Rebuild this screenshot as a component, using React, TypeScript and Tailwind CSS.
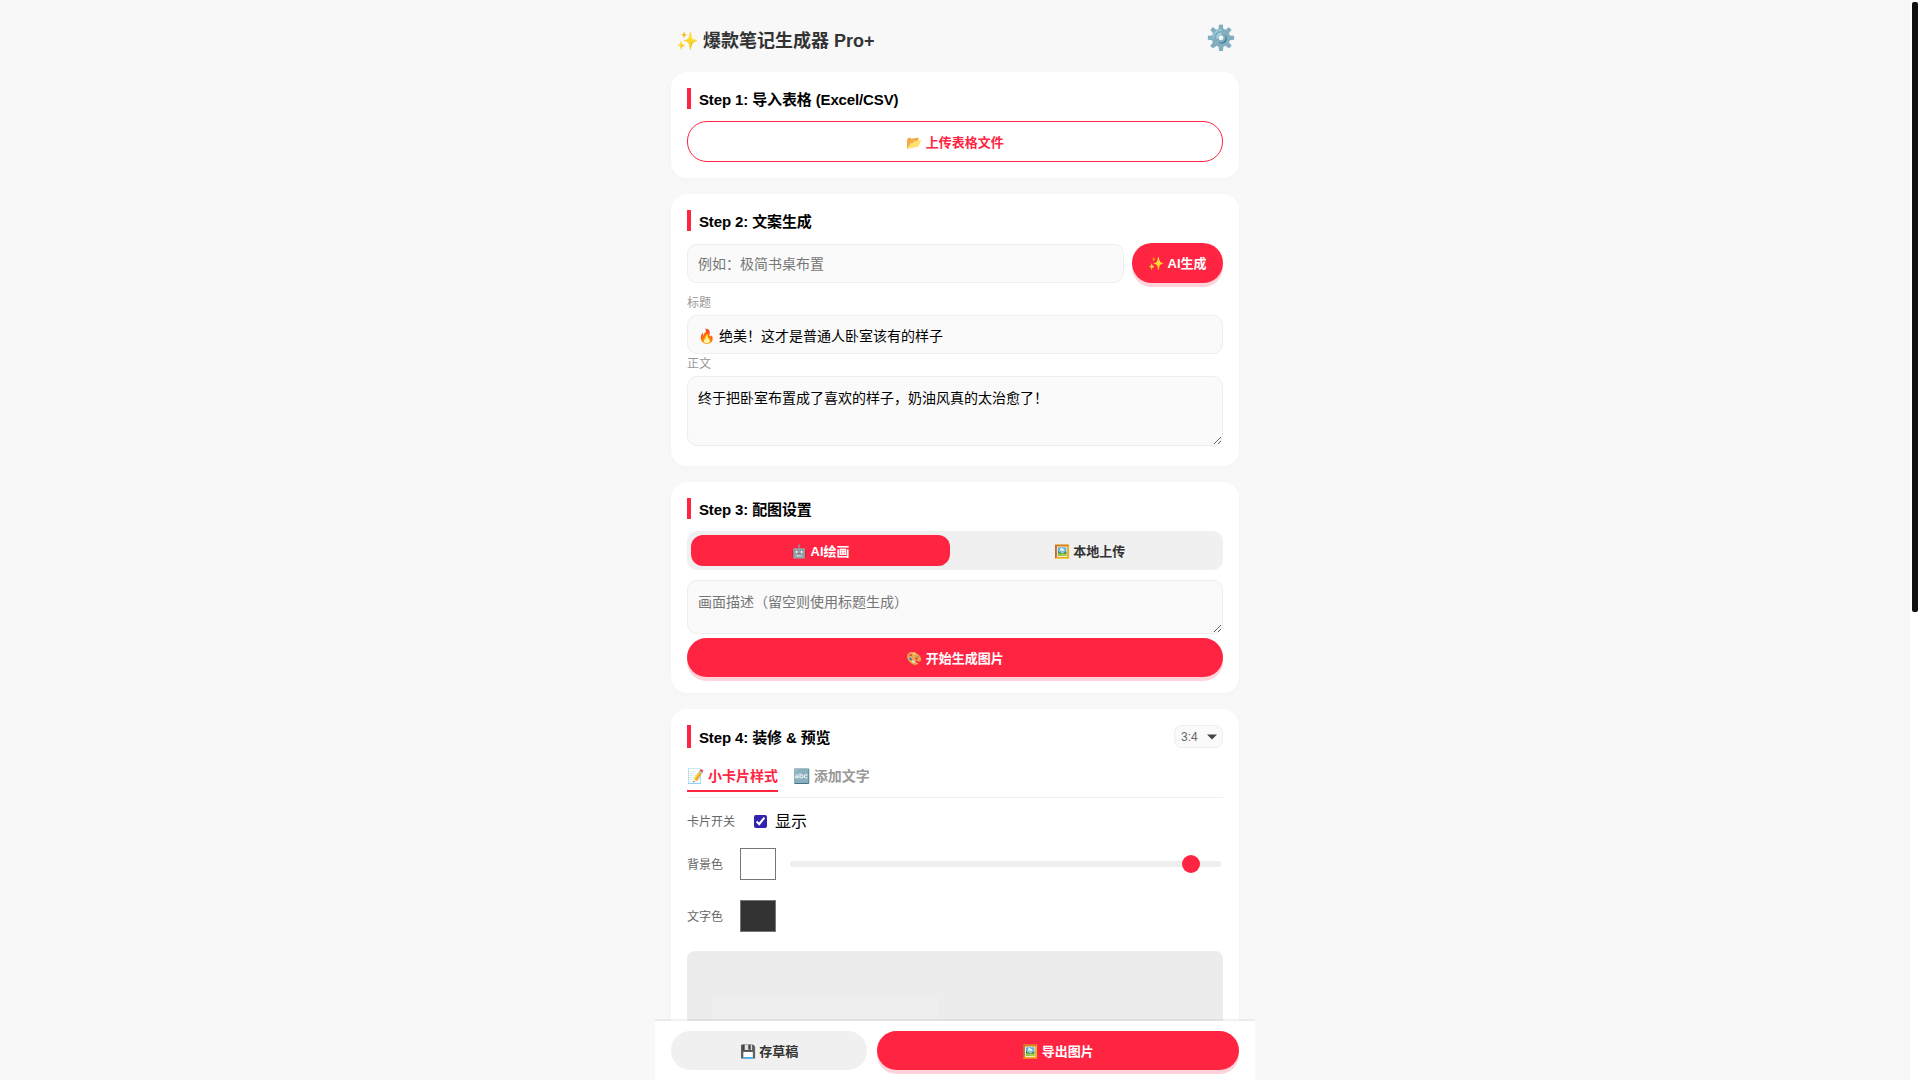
function StepTitle({ children }: { children: React.ReactNode }) {
  return (
    <div className="flex items-center border-l-4 border-[#ff2442] pl-2 pt-[2px] text-[15px] font-bold leading-[19px] tracking-[-0.13px] text-black">
      {children}
    </div>
  );
}

function Card({ children, className = "" }: { children: React.ReactNode; className?: string }) {
  return (
    <div className={`mb-4 rounded-2xl bg-white p-4 shadow-[0_2px_8px_rgba(0,0,0,0.02)] ${className}`}>{children}</div>
  );
}

const fieldCls =
  "block w-full rounded-[10px] border border-[#eeeeee] bg-[#fafafa] px-[10px] text-sm text-black outline-none placeholder:text-[#757575]";

const primary =
  "flex h-[39px] items-center justify-center rounded-[20px] bg-[#ff2442] pt-[2px] text-[13px] font-bold text-white shadow-[0_4px_0_rgba(255,36,66,0.2)]";

export default function App() {
  return (
    <div className="flex h-screen overflow-hidden bg-[#f8f8f8] font-['Liberation_Sans','Noto_Sans_CJK_SC',sans-serif]">
      <main className="relative min-w-0 flex-1 overflow-hidden">
        <div className="mx-auto w-[600px] px-4">
          <div className="flex h-[72px] items-start justify-between pl-[5px] pr-[3px] pt-[27px]">
            <div className="text-lg font-bold leading-[28px] text-[#333333]">✨ 爆款笔记生成器 Pro+</div>
            <div className="-mt-[3px] text-2xl leading-[28px]">⚙️</div>
          </div>

          <Card>
            <StepTitle>Step 1: 导入表格 (Excel/CSV)</StepTitle>
            <button className="mt-3 flex h-[41px] w-full items-center justify-center rounded-[20px] border border-[#ff2442] bg-white pt-[2px] text-[13px] font-bold text-[#ff2442]">
              📂 上传表格文件
            </button>
          </Card>

          <Card>
            <StepTitle>Step 2: 文案生成</StepTitle>
            <div className="mt-3 flex gap-2">
              <input className={`${fieldCls} h-[39px] min-w-0 flex-1 self-end`} placeholder="例如：极简书桌布置" />
              <button className={`${primary} h-[40px] w-[91px] shrink-0`}>✨ AI生成</button>
            </div>
            <div className="mt-[9px] text-xs leading-[22px] text-[#999999]">标题</div>
            <input className={`${fieldCls} mt-px h-[39px]`} defaultValue="🔥 绝美！这才是普通人卧室该有的样子" />
            <div className="-mt-px text-xs leading-[22px] text-[#999999]">正文</div>
            <textarea
              className={`${fieldCls} mt-px h-[70px] pb-[10px] pt-[11px] leading-[20px]`}
              defaultValue="终于把卧室布置成了喜欢的样子，奶油风真的太治愈了！"
            />
            <div className="h-1" />
          </Card>

          <Card>
            <StepTitle>Step 3: 配图设置</StepTitle>
            <div className="mt-3 flex h-[39px] gap-[10px] rounded-[10px] bg-[#f0f0f0] p-1">
              <div className="flex flex-1 items-center justify-center rounded-[12px] bg-[#ff2442] pt-[2px] text-[13px] font-bold text-white">
                🤖 AI绘画
              </div>
              <div className="flex flex-1 items-center justify-center pt-[2px] text-[13px] font-bold text-[#333333]">
                🖼️ 本地上传
              </div>
            </div>
            <textarea
              className={`${fieldCls} mt-[10px] h-[54px] pb-[10px] pt-[11px] leading-[20px]`}
              placeholder="画面描述（留空则使用标题生成）"
            />
            <button className={`${primary} mt-1 w-full`}>🎨 开始生成图片</button>
          </Card>

          <Card>
            <div className="flex items-stretch justify-between">
              <StepTitle>Step 4: 装修 &amp; 预览</StepTitle>
              <div className="flex h-[23px] w-[49px] items-center justify-between rounded-lg border border-[#eeeeee] bg-[#fafafa] pl-[6px] pr-[3px] text-xs text-[#666666]">
                3:4
                <svg width="14" height="14" viewBox="0 0 14 14" className="fill-[#444444]">
                  <path d="M2 4.5h10L7 9.5z" />
                </svg>
              </div>
            </div>
            <div className="mt-[17px] flex gap-[15px] border-b border-[#eeeeee] pb-[5px] text-sm font-bold leading-[19px] text-[#999999]">
              <div className="border-b-2 border-[#ff2442] pb-1 pt-[2px] text-[#ff2442]">📝 小卡片样式</div>
              <div className="pt-[2px]">🔤 添加文字</div>
            </div>
            <div className="mt-[11px] flex h-[24px] items-center">
              <span className="w-[67px] pt-[2px] text-xs text-[#666666]">卡片开关</span>
              <input type="checkbox" defaultChecked className="m-0 h-[13px] w-[13px] accent-[#3023ae]" />
              <span className="ml-2 pt-[2px] text-base text-black">显示</span>
            </div>
            <div className="mt-[15px] flex h-[32px] items-center">
              <span className="w-[53px] pt-[2px] text-xs text-[#666666]">背景色</span>
              <div className="h-[32px] w-[36px] border border-[#767676] bg-white" />
              <div className="relative ml-[14px] mr-[2px] h-[6px] flex-1 rounded-full bg-[#eeeeee]">
                <div className="absolute left-[392px] top-[-6px] h-[18px] w-[18px] rounded-full bg-[#ff2442]" />
              </div>
            </div>
            <div className="mt-[20px] flex h-[32px] items-center">
              <span className="w-[53px] pt-[2px] text-xs text-[#666666]">文字色</span>
              <div className="h-[32px] w-[36px] border border-[#767676] bg-[#333333]" />
            </div>
            <div className="mt-[19px] h-[500px] overflow-hidden rounded-lg bg-[#ececec] pl-[26px] pt-[47px]">
              <div className="h-[300px] w-[225px] bg-[#eeeeee]" />
            </div>
          </Card>
        </div>

        <div className="absolute bottom-0 left-1/2 flex w-[600px] -translate-x-1/2 gap-[10px] bg-white px-4 py-[10px] shadow-[0_-2px_0_rgba(0,0,0,0.05)]">
          <button className="flex h-[39px] w-[196px] items-center justify-center rounded-[20px] bg-[#f0f0f0] pt-[2px] text-[13px] font-bold text-[#333333]">
            💾 存草稿
          </button>
          <button className={`${primary} flex-1`}>🖼️ 导出图片</button>
        </div>
      </main>
      <aside className="w-[10px] shrink-0 bg-white pl-[2px] pr-[2px] pt-[2px]">
        <div className="h-[610px] rounded-[2px] bg-[#111111]" />
      </aside>
    </div>
  );
}
